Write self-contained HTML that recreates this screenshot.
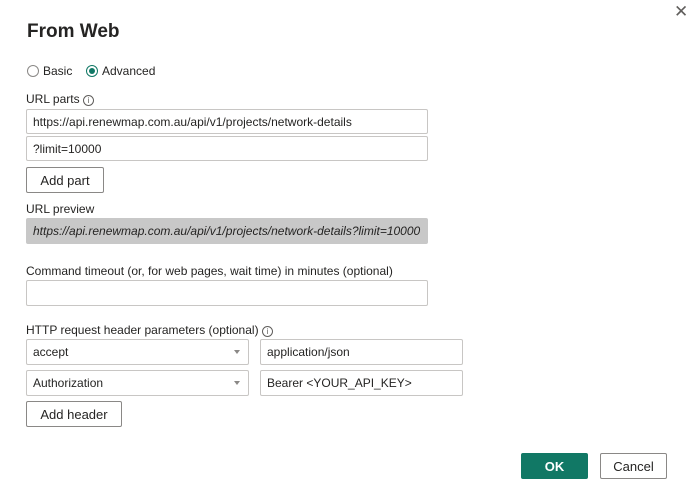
<!DOCTYPE html>
<html><head><style>
*{box-sizing:border-box;margin:0;padding:0}
body{width:687px;height:490px;background:#fff;font-family:"Liberation Sans",sans-serif;font-size:12px;color:#252423;position:relative;overflow:hidden}
.a{position:absolute;white-space:nowrap}
.box{position:absolute;border:1px solid #c8c6c4;border-radius:2px;background:#fff;padding-left:6px;display:flex;align-items:center}
.btn{position:absolute;border:1px solid #8a8886;border-radius:2px;background:#fff;display:flex;align-items:center;justify-content:center;font-size:13px}
.info{position:absolute;width:11px;height:11px;border:1px solid #605e5c;border-radius:50%;font-size:8px;line-height:9px;text-align:center;color:#605e5c}
.caret{position:absolute;right:8px;top:10px;width:0;height:0;border-left:3px solid transparent;border-right:3px solid transparent;border-top:4px solid #8a8886}
</style></head><body>
<div class="a" style="left:674px;top:2px;font-size:17px;color:#605e5c">✕</div>
<div class="a" style="left:27px;top:21px;font-size:19px;color:#252423;font-weight:600">From Web</div>
<div class="a" style="left:27px;top:65px;width:12px;height:12px;border:1px solid #8a8886;border-radius:50%"></div>
<div class="a" style="left:43px;top:64px">Basic</div>
<div class="a" style="left:86px;top:65px;width:12px;height:12px;border:1px solid #117865;border-radius:50%"><div style="margin:2px;width:6px;height:6px;border-radius:50%;background:#117865"></div></div>
<div class="a" style="left:102px;top:64px">Advanced</div>
<div class="a" style="left:26px;top:92px">URL parts</div>
<div class="info" style="left:83px;top:95px">i</div>
<div class="box" style="left:26px;top:109px;width:402px;height:25px">https://api.renewmap.com.au/api/v1/projects/network-details</div>
<div class="box" style="left:26px;top:136px;width:402px;height:25px">?limit=10000</div>
<div class="btn" style="left:26px;top:167px;width:78px;height:26px">Add part</div>
<div class="a" style="left:26px;top:202px">URL preview</div>
<div class="box" style="left:26px;top:218px;width:402px;height:26px;background:#c8c8c8;border-color:#c8c8c8;font-style:italic">https://api.renewmap.com.au/api/v1/projects/network-details?limit=10000</div>
<div class="a" style="left:26px;top:264px">Command timeout (or, for web pages, wait time) in minutes (optional)</div>
<div class="box" style="left:26px;top:280px;width:402px;height:26px"></div>
<div class="a" style="left:26px;top:323px">HTTP request header parameters (optional)</div>
<div class="info" style="left:262px;top:326px">i</div>
<div class="box" style="left:26px;top:339px;width:223px;height:26px">accept<span class="caret"></span></div>
<div class="box" style="left:260px;top:339px;width:203px;height:26px">application/json</div>
<div class="box" style="left:26px;top:370px;width:223px;height:26px">Authorization<span class="caret"></span></div>
<div class="box" style="left:260px;top:370px;width:203px;height:26px">Bearer &lt;YOUR_API_KEY&gt;</div>
<div class="btn" style="left:26px;top:401px;width:96px;height:26px">Add header</div>
<div class="btn" style="left:521px;top:453px;width:67px;height:26px;background:#117865;border-color:#117865;color:#fff;font-weight:bold">OK</div>
<div class="btn" style="left:600px;top:453px;width:67px;height:26px">Cancel</div>
</body></html>
